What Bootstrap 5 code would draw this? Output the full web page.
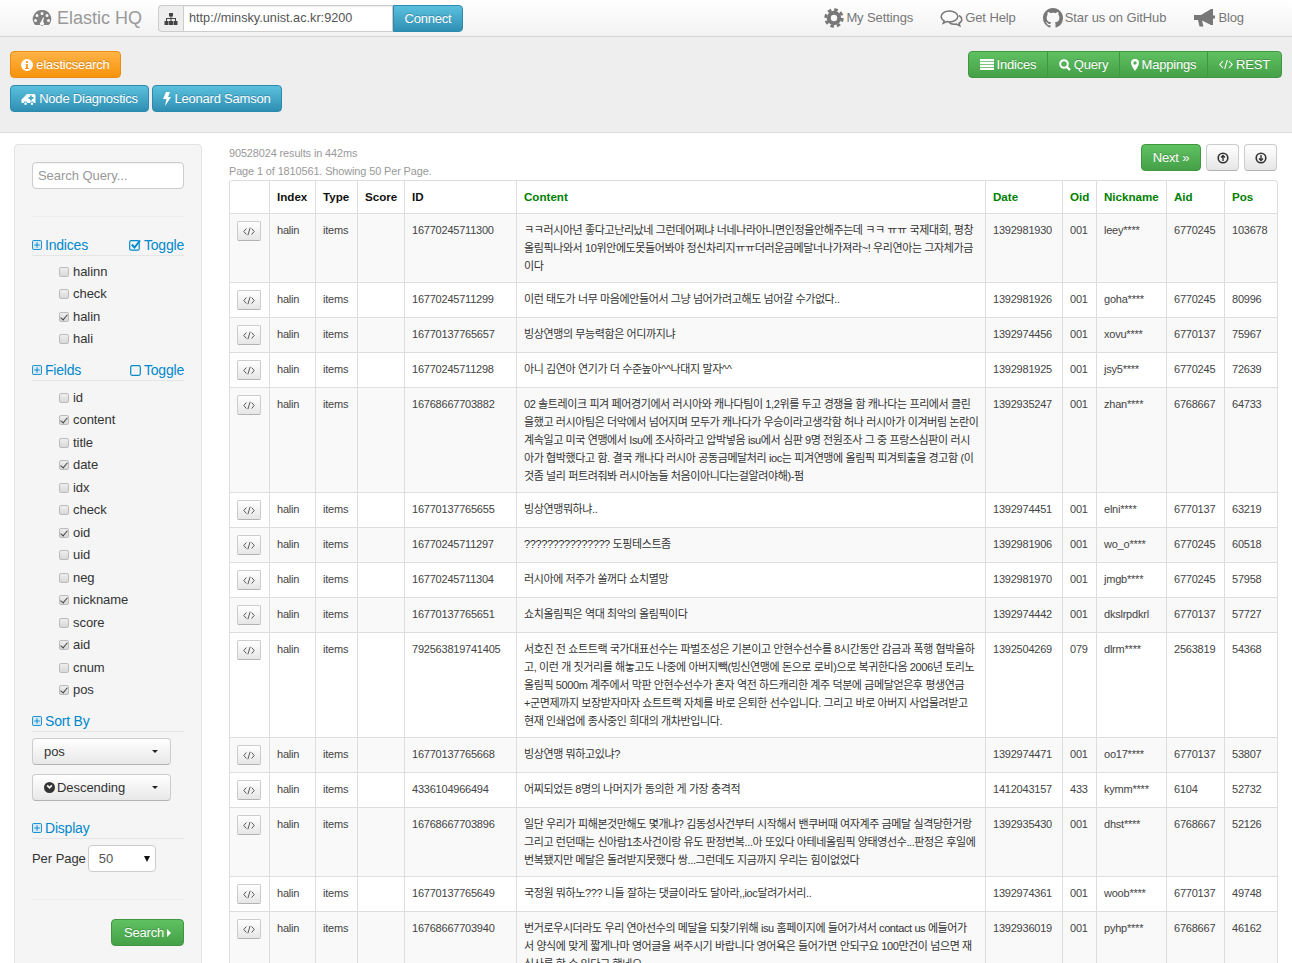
<!DOCTYPE html>
<html lang="ko"><head><meta charset="utf-8"><title>Elastic HQ</title>
<link rel="stylesheet" href="https://cdn.jsdelivr.net/npm/bootstrap@5.3.0/dist/css/bootstrap.min.css">
<style>
html,body{height:963px;overflow:hidden;background:#fff}
body{font-family:"Liberation Sans","Noto Sans CJK KR",sans-serif;font-size:13px;line-height:18px;color:#333}
svg.ic{display:inline-block;vertical-align:-2px;fill:currentColor;flex:none}
.topbar{height:37px;background:linear-gradient(#fff,#f2f2f2);border-bottom:1px solid #d5d5d5;padding:5px 0 0 32px;align-items:flex-start}
.brand{color:#999;font-size:18px;width:126px;line-height:26px;gap:5px}
.brand svg{color:#808080}
.urlgroup{width:305px;height:27px}
.urladdon{width:25px;background:#eee;border:1px solid #ccc;border-right:0;border-radius:4px 0 0 4px;color:#444}
.urlinput{width:210px;border:1px solid #ccc;border-radius:0;height:27px;padding:0 5px;font-size:12.7px;color:#555;box-shadow:inset 0 1px 1px rgba(0,0,0,.07);background:#fff;line-height:25px}
.btn.gbtn{font-size:13px;line-height:18px;padding:4px 10px;height:27px;border-radius:4px;color:#fff;letter-spacing:-.2px;text-shadow:0 -1px 0 rgba(0,0,0,.2);display:inline-flex;align-items:center;justify-content:center;gap:3px;white-space:nowrap}
.g-info{background:linear-gradient(#5bc0de,#2f8fb3);border:1px solid #2b8aad}
.g-warn{background:linear-gradient(#ffb347,#f7930b);border:1px solid #ea8d10}
.g-ok{background:linear-gradient(#5fc162,#45a047);border:1px solid #3f9641}
.btn.g-info:hover,.btn.g-warn:hover,.btn.g-ok:hover{color:#fff}
.urlgroup .gbtn{width:70px;border-radius:0 4px 4px 0;margin-left:0}
.navlinks{margin-left:auto;padding-right:48px;height:26px;gap:27px}
.navlink{color:#777;font-size:13px;letter-spacing:-.1px;text-decoration:none;gap:2px;line-height:26px}
.band{height:96px;background:#eee;border-bottom:1px solid #ddd;padding:14px 10px 0;justify-content:space-between}
.rowbtn{gap:3px;margin-bottom:7px}
.btn-group.navgroup .gbtn{border-radius:0;border-left:1px solid #3f9641;padding:4px 0;flex:none}
.btn-group.navgroup .gbtn:first-child{border-radius:4px 0 0 4px}
.btn-group.navgroup .gbtn:last-child{border-radius:0 4px 4px 0}
.w-es{width:111px}.w-nd{width:139px}.w-ls{width:130px}
.w-ind{width:80px}.w-qry{width:73px}.w-map{width:89px}.w-rst{width:75px}
.w-srch{width:73px}.w-next{width:60px}
.mainwrap{padding:11px 15px 0 14px;gap:27px;align-items:flex-start}
.sidepanel{width:188px;flex:none;height:830px;background:#f5f5f5;border:1px solid #e3e3e3;border-radius:4px;padding:17px 17px 0;letter-spacing:-.05px}
.qinput{height:27px;width:152px;border:1px solid #ccc;border-radius:4px;padding:0 5px;font-size:13px;background:#fff;color:#999;line-height:25px;box-shadow:inset 0 1px 1px rgba(0,0,0,.05)}
.siderule{border:0;border-top:1px solid #eee;margin:0;opacity:1}
.rule1{margin-top:27px}
.rule2{margin-top:27px}
.shead{display:flex;justify-content:space-between;align-items:center;border-bottom:1px solid #e5e5e5;height:19px;color:#0088cc;font-size:14px;line-height:18px;padding-bottom:2px;letter-spacing:-.2px}
.shead span{display:inline-flex;align-items:center;gap:3px}
.sh-ind{margin-top:20px}.sh-fld{margin-top:11px}.sh-srt{margin-top:11px;margin-bottom:6px}.sh-dsp{margin-top:19px}
.cklist{list-style:none;margin:0;padding:5px 0 0 27px}
.cklist.ck-f{padding-top:6px}
.cklist li{height:22.5px;display:flex;align-items:center;gap:4px;color:#333;padding-bottom:1px}
.cbx{appearance:none;-webkit-appearance:none;width:10px;height:10px;border:1px solid #bbb;border-radius:2px;background:linear-gradient(#eee,#d8d8d8);margin:0;flex:none}
.cbx:checked{background:linear-gradient(#eee,#d8d8d8);position:relative}
.cbx:checked::after{content:"";position:absolute;left:2px;top:0;width:4px;height:7px;border:solid #444;border-width:0 1.5px 1.5px 0;transform:rotate(40deg)}
.sddl{width:139px;height:27px;background:linear-gradient(#fff,#e8e8e8);border:1px solid #ccc;border-bottom-color:#b3b3b3;border-radius:4px;display:flex;align-items:center;justify-content:space-between;padding:0 12px 0 11px;color:#333;margin-bottom:9px;gap:2px}
.sddl .lbl{display:flex;align-items:center;gap:2px}
.caretd{width:0;height:0;border-left:3px solid transparent;border-right:3px solid transparent;border-top:3px solid #222;flex:none}
.perrow{display:flex;align-items:center;gap:2px;margin-top:6px;height:27px}
.persel{width:68px;height:27px;border:1px solid #ccc;border-radius:4px;background:#fff;display:flex;align-items:center;justify-content:space-between;padding:0 5px 0 10px;color:#555}
.perarrow{width:0;height:0;border-left:3.5px solid transparent;border-right:3.5px solid transparent;border-top:6px solid #111}
.searchrow{display:flex;justify-content:flex-end;margin-top:19px}
.carr{width:0;height:0;border-top:4px solid transparent;border-bottom:4px solid transparent;border-left:4px solid #fff}
.resarea{width:1048px;flex:none}
.resmeta{color:#999;font-size:10.9px;line-height:18px;letter-spacing:-.1px}
.toptools{gap:5px;height:27px;align-items:flex-start}
.btn.greybtn{height:27px;width:33px;padding:0;background:linear-gradient(#fff,#e6e6e6);border:1px solid #ccc;border-bottom-color:#b3b3b3;border-radius:4px;color:#333;display:inline-flex;align-items:center;justify-content:center}
.reshead{height:36px;justify-content:space-between}
.table.rtable{width:1048px;table-layout:fixed;margin:0;border-collapse:separate;border-spacing:0;font-size:11px;line-height:18px;--bs-table-striped-bg:#f9f9f9;--bs-table-striped-color:#444;--bs-table-color:#444;border:1px solid #ddd;border-left:0;border-radius:4px;color:#444;letter-spacing:-.02em}
.table.rtable>:not(caption)>*>*{padding:7px 8px 7px 7px;border-width:1px 0 0 1px;border-style:solid;border-color:#ddd;vertical-align:top;white-space:nowrap;overflow:visible;color:#444}
.table.rtable>thead>tr>th{border-top-width:0;font-size:11.6px;color:#111;font-weight:700;letter-spacing:0}
.table.rtable>thead>tr>th.gh{color:#008000}
.table.rtable>tbody>tr>td.ctext{font-size:11px;color:#333;letter-spacing:-.036em}
.c1{width:40px}.c2{width:46px}.c3{width:42px}.c4{width:47px}.c5{width:112px}.c6{width:469px}.c7{width:77px}.c8{width:34px}.c9{width:70px}.c10{width:58px}.c11{width:53px}
.codebtn{width:24px;height:20px;padding:0;display:flex;align-items:center;justify-content:center;background:linear-gradient(#fff,#e6e6e6);border:1px solid #ccc;border-bottom-color:#b3b3b3;border-radius:2px;color:#555}
</style></head>
<body>
<svg width="0" height="0" class="position-absolute">
<defs>
<symbol id="i-code" viewBox="0 0 16 12"><path d="M4.5 2 1 6l3.5 4M11.5 2 15 6l-3.500 4M9.500 1 6.500 11" fill="none" stroke="currentColor" stroke-width="1.300"/></symbol>
<symbol id="i-plus" viewBox="0 0 11 11"><rect x=".5" y=".5" width="10" height="10" rx="1.500" fill="#d8e8f5" stroke="currentColor"/><path d="M5.500 2.500v6M2.500 5.500h6" stroke="currentColor"/></symbol>
</defs>
</svg>
<div class="topbar d-flex">
  <div class="brand d-flex align-items-center">
    <svg class="ic" width="20" height="18" viewBox="0 0 20 18"><path fill-rule="evenodd" d="M10 1a9 9 0 0 0-8 13.500c.6 1 1.500 1.500 2.500 1.500h11c1 0 1.900-.5 2.500-1.500A9 9 0 0 0 10 1zM10 3a1.500 1.500 0 1 1 0 3 1.500 1.500 0 0 1 0-3zM5 5a1.500 1.500 0 1 1 0 3 1.500 1.500 0 0 1 0-3zM15 5a1.500 1.500 0 1 1 0 3 1.500 1.500 0 0 1 0-3zM3.500 10a1.500 1.500 0 1 1 0 3 1.500 1.500 0 0 1 0-3zM16.500 10a1.500 1.500 0 1 1 0 3 1.500 1.500 0 0 1 0-3zM11 8.500l1-.2-.9 4.700a2 2 0 1 1-2.200 0z"/></svg>
    <span>Elastic HQ</span>
  </div>
  <div class="urlgroup d-flex">
    <div class="urladdon d-flex align-items-center justify-content-center"><svg class="ic" width="14" height="12" viewBox="0 0 14 12"><path d="M5 0h4v3.500H7.500V5H12v3h1.500v4h-4V8H11V6H7.500v2H9v4H5V8h1.500V6H3v2h1.500v4h-4V8H2V5h4.500V3.500H5z"/></svg></div>
    <div class="urlinput">http://minsky.unist.ac.kr:9200</div>
    <a class="btn gbtn g-info">Connect</a>
  </div>
  <div class="navlinks d-flex">
    <a class="navlink d-flex align-items-center"><svg class="ic" width="20" height="20" viewBox="0 0 20 20"><circle cx="10" cy="10" r="5.200" fill="none" stroke="currentColor" stroke-width="4"/><circle cx="10" cy="10" r="8.300" fill="none" stroke="currentColor" stroke-width="2.800" stroke-dasharray="3.600 2.910"/></svg>My Settings</a>
    <a class="navlink d-flex align-items-center"><svg class="ic" width="23" height="20" viewBox="0 0 23 20"><g fill="none" stroke="currentColor" stroke-width="1.500"><path d="M9.500 3C5 3 1.200 5.400 1.200 8.500c0 1.800 1.200 3.300 3 4.300l-1 2.500 3.500-1.700c1 .2 1.800.3 2.800.3 4.500 0 8.300-2.400 8.300-5.400S14 3 9.500 3z"/><path d="M19 7.500c1.700 1 2.800 2.300 2.800 3.900 0 1.600-1.100 3-2.800 3.800l.8 2.600-3.500-1.800c-3 .6-6-.2-7.300-1.800"/></g></svg>Get Help</a>
    <a class="navlink d-flex align-items-center"><svg class="ic" width="20" height="20" viewBox="0 0 16 16"><path d="M8 0C3.580 0 0 3.580 0 8c0 3.540 2.290 6.530 5.470 7.590.4.070.55-.17.55-.38 0-.19-.01-.82-.01-1.490-2.010.37-2.530-.49-2.690-.94-.09-.23-.48-.94-.82-1.130-.28-.15-.68-.52-.01-.53.63-.01 1.080.58 1.230.82.720 1.210 1.870.87 2.330.66.070-.52.280-.87.510-1.070-1.780-.2-3.640-.89-3.640-3.950 0-.87.310-1.590.820-2.150-.08-.2-.36-1.020.080-2.120 0 0 .67-.21 2.200.82.640-.18 1.320-.27 2-.27.680 0 1.360.09 2 .27 1.530-1.040 2.200-.82 2.200-.82.440 1.100.160 1.920.080 2.120.510.560.820 1.270.820 2.150 0 3.070-1.870 3.750-3.650 3.950.290.250.540.730.540 1.480 0 1.070-.01 1.930-.01 2.200 0 .210.150.460.550.380A8.013 8.013 0 0 0 16 8c0-4.420-3.580-8-8-8z"/></svg>Star us on GitHub</a>
    <a class="navlink d-flex align-items-center"><svg class="ic" width="23" height="20" viewBox="0 0 23 20"><path d="M1 7h7l10-6h2v6.500h2v3h-2V17h-2L9 12.500l1.500 6H6.500L5 12H1z"/></svg>Blog</a>
  </div>
</div>
<div class="band d-flex">
  <div>
    <div class="d-flex rowbtn"><a class="btn gbtn g-warn w-es"><svg class="ic" width="12" height="12" viewBox="0 0 12 12"><path fill-rule="evenodd" d="M6 0a6 6 0 1 0 0 12A6 6 0 0 0 6 0zM5 2h2v2H5zM4.500 5H7v4h1v1H4V9h1V6h-.5z"/></svg>elasticsearch</a></div>
    <div class="d-flex rowbtn"><a class="btn gbtn g-info w-nd"><svg class="ic" width="15" height="12" viewBox="0 0 15 12"><path fill-rule="evenodd" d="M6 1h7a1.500 1.500 0 0 1 1.500 1.500V10h-1.600a2 2 0 0 0-3.800 0H6.400a2 2 0 0 0-3.800 0H.5V6.500zM9 2.500v1.600H7.500v1.800H9v1.600h1.800V5.900h1.600V4.100h-1.600V2.500zM4.500 9.500a1.200 1.200 0 1 1 0 2.400 1.200 1.200 0 0 1 0-2.400zM11 9.500a1.200 1.200 0 1 1 0 2.400 1.200 1.200 0 0 1 0-2.400z"/></svg>Node Diagnostics</a><a class="btn gbtn g-info w-ls"><svg class="ic" width="8" height="14" viewBox="0 0 8 14"><path d="M3 0h4L5 5h3L2 14l1.500-7H0z"/></svg>Leonard Samson</a></div>
  </div>
  <div class="btn-group navgroup align-self-start">
    <a class="btn gbtn g-ok w-ind"><svg class="ic" width="14" height="11" viewBox="0 0 14 11"><path d="M0 0h14v2.200H0zM0 2.900h14v2.200H0zM0 5.800h14V8H0zM0 8.700h14V11H0z"/></svg>Indices</a>
    <a class="btn gbtn g-ok w-qry"><svg class="ic" width="12" height="12" viewBox="0 0 12 12"><circle cx="5" cy="5" r="3.800" fill="none" stroke="currentColor" stroke-width="2"/><path d="M7.800 7.800 11 11" stroke="currentColor" stroke-width="2.400"/></svg>Query</a>
    <a class="btn gbtn g-ok w-map"><svg class="ic" width="8" height="12" viewBox="0 0 8 12"><path fill-rule="evenodd" d="M4 0a4 4 0 0 0-4 4c0 2.500 4 8 4 8s4-5.500 4-8a4 4 0 0 0-4-4zM4 2.300a1.700 1.700 0 1 1 0 3.400 1.700 1.700 0 0 1 0-3.400z"/></svg>Mappings</a>
    <a class="btn gbtn g-ok w-rst"><svg class="ic" width="14" height="11" viewBox="0 0 16 12"><use href="#i-code"/></svg>REST</a>
  </div>
</div>
<div class="mainwrap d-flex">
  <div class="sidepanel">
    <div class="qinput">Search Query...</div>
    <hr class="siderule rule1">
    <div class="shead sh-ind"><span><svg class="ic" width="10" height="10"><use href="#i-plus"/></svg>Indices</span><span><svg class="ic" width="12" height="12" viewBox="0 0 12 12"><rect x=".7" y="1.700" width="9.500" height="9.500" rx="1.500" fill="none" stroke="currentColor" stroke-width="1.200"/><path d="M2.800 5.500 5.500 8.500 11 1.500" fill="none" stroke="currentColor" stroke-width="2"/></svg>Toggle</span></div>
    <ul class="cklist"><li><input class="cbx" type="checkbox">halinn</li><li><input class="cbx" type="checkbox">check</li><li><input class="cbx" type="checkbox" checked>halin</li><li><input class="cbx" type="checkbox">hali</li></ul>
    <div class="shead sh-fld"><span><svg class="ic" width="10" height="10"><use href="#i-plus"/></svg>Fields</span><span><svg class="ic" width="11" height="11" viewBox="0 0 11 11"><rect x=".7" y=".7" width="9.600" height="9.600" rx="1.500" fill="none" stroke="currentColor" stroke-width="1.200"/></svg>Toggle</span></div>
    <ul class="cklist ck-f"><li><input class="cbx" type="checkbox">id</li><li><input class="cbx" type="checkbox" checked>content</li><li><input class="cbx" type="checkbox">title</li><li><input class="cbx" type="checkbox" checked>date</li><li><input class="cbx" type="checkbox">idx</li><li><input class="cbx" type="checkbox">check</li><li><input class="cbx" type="checkbox" checked>oid</li><li><input class="cbx" type="checkbox">uid</li><li><input class="cbx" type="checkbox">neg</li><li><input class="cbx" type="checkbox" checked>nickname</li><li><input class="cbx" type="checkbox">score</li><li><input class="cbx" type="checkbox" checked>aid</li><li><input class="cbx" type="checkbox">cnum</li><li><input class="cbx" type="checkbox" checked>pos</li></ul>
    <div class="shead sh-srt"><span><svg class="ic" width="10" height="10"><use href="#i-plus"/></svg>Sort By</span></div>
    <div class="sddl"><span class="lbl">pos</span><i class="caretd"></i></div>
    <div class="sddl"><span class="lbl"><svg class="ic" width="11" height="11" viewBox="0 0 11 11"><path fill-rule="evenodd" d="M5.500 0a5.500 5.500 0 1 0 0 11 5.500 5.500 0 0 0 0-11zM2.500 4l1.300-1.200 1.700 1.700 1.700-1.700L8.500 4l-3 3z"/></svg>Descending</span><i class="caretd"></i></div>
    <div class="shead sh-dsp"><span><svg class="ic" width="10" height="10"><use href="#i-plus"/></svg>Display</span></div>
    <div class="perrow"><span>Per Page</span><div class="persel"><span>50</span><i class="perarrow"></i></div></div>
    <hr class="siderule rule2">
    <div class="searchrow"><a class="btn gbtn g-ok w-srch">Search<i class="carr"></i></a></div>
  </div>
  <div class="resarea">
    <div class="reshead d-flex">
      <div class="resmeta"><div>90528024 results in 442ms</div><div>Page 1 of 1810561. Showing 50 Per Page.</div></div>
      <div class="d-flex toptools">
        <a class="btn gbtn g-ok w-next">Next »</a>
        <a class="btn greybtn"><svg class="ic" width="12" height="12" viewBox="0 0 12 12"><circle cx="6" cy="6" r="4.800" fill="none" stroke="currentColor" stroke-width="1.600"/><path d="M6 9V3.500M4 5.500l2-2 2 2" fill="none" stroke="currentColor" stroke-width="1.400"/></svg></a>
        <a class="btn greybtn"><svg class="ic" width="12" height="12" viewBox="0 0 12 12"><circle cx="6" cy="6" r="4.800" fill="none" stroke="currentColor" stroke-width="1.600"/><path d="M6 3v5.500M4 6.500l2 2 2-2" fill="none" stroke="currentColor" stroke-width="1.400"/></svg></a>
      </div>
    </div>
    <table class="table table-striped rtable">
      <colgroup><col class="c1"><col class="c2"><col class="c3"><col class="c4"><col class="c5"><col class="c6"><col class="c7"><col class="c8"><col class="c9"><col class="c10"><col class="c11"></colgroup>
      <thead><tr><th></th><th>Index</th><th>Type</th><th>Score</th><th>ID</th><th class="gh">Content</th><th class="gh">Date</th><th class="gh">Oid</th><th class="gh">Nickname</th><th class="gh">Aid</th><th class="gh">Pos</th></tr></thead>
      <tbody>
<tr><td><a class="codebtn"><svg width="12" height="9"><use href="#i-code"/></svg></a></td><td>halin</td><td>items</td><td></td><td>16770245711300</td><td class="ctext">ㅋㅋ러시아년 좋다고난리났네 그런데어쩌냐 너네나라아니면인정을안해주는데 ㅋㅋ ㅠㅠ 국제대회, 평창<br>올림픽나와서 10위안에도못들어봐야 정신차리지ㅠㅠ더러운금메달너나가져라~! 우리연아는 그자체가금<br>이다</td><td>1392981930</td><td>001</td><td>leey****</td><td>6770245</td><td>103678</td></tr>
<tr><td><a class="codebtn"><svg width="12" height="9"><use href="#i-code"/></svg></a></td><td>halin</td><td>items</td><td></td><td>16770245711299</td><td class="ctext">이런 태도가 너무 마음에안들어서 그냥 넘어가려고해도 넘어갈 수가없다..</td><td>1392981926</td><td>001</td><td>goha****</td><td>6770245</td><td>80996</td></tr>
<tr><td><a class="codebtn"><svg width="12" height="9"><use href="#i-code"/></svg></a></td><td>halin</td><td>items</td><td></td><td>16770137765657</td><td class="ctext">빙상연맹의 무능력함은 어디까지냐</td><td>1392974456</td><td>001</td><td>xovu****</td><td>6770137</td><td>75967</td></tr>
<tr><td><a class="codebtn"><svg width="12" height="9"><use href="#i-code"/></svg></a></td><td>halin</td><td>items</td><td></td><td>16770245711298</td><td class="ctext">아니 김연아 연기가 더 수준높아^^나대지 말자^^</td><td>1392981925</td><td>001</td><td>jsy5****</td><td>6770245</td><td>72639</td></tr>
<tr><td><a class="codebtn"><svg width="12" height="9"><use href="#i-code"/></svg></a></td><td>halin</td><td>items</td><td></td><td>16768667703882</td><td class="ctext">02 솔트레이크 피겨 페어경기에서 러시아와 캐나다팀이 1,2위를 두고 경쟁을 함 캐나다는 프리에서 클린<br>을했고 러시아팀은 더악에서 넘어지며 모두가 캐나다가 우승이라고생각함 허나 러시아가 이겨버림 논란이<br>계속일고 미국 연맹에서 Isu에 조사하라고 압박넣음 isu에서 심판 9명 전원조사 그 중 프랑스심판이 러시<br>아가 협박했다고 함. 결국 캐나다 러시아 공동금메달처리 ioc는 피겨연맹에 올림픽 피겨퇴출을 경고함 (이<br>것좀 널리 퍼트려줘봐 러시아놈들 처음이아니다는걸알려야해)-펌</td><td>1392935247</td><td>001</td><td>zhan****</td><td>6768667</td><td>64733</td></tr>
<tr><td><a class="codebtn"><svg width="12" height="9"><use href="#i-code"/></svg></a></td><td>halin</td><td>items</td><td></td><td>16770137765655</td><td class="ctext">빙상연맹뭐하냐..</td><td>1392974451</td><td>001</td><td>elni****</td><td>6770137</td><td>63219</td></tr>
<tr><td><a class="codebtn"><svg width="12" height="9"><use href="#i-code"/></svg></a></td><td>halin</td><td>items</td><td></td><td>16770245711297</td><td class="ctext">??????????????? 도핑테스트좀</td><td>1392981906</td><td>001</td><td>wo_o****</td><td>6770245</td><td>60518</td></tr>
<tr><td><a class="codebtn"><svg width="12" height="9"><use href="#i-code"/></svg></a></td><td>halin</td><td>items</td><td></td><td>16770245711304</td><td class="ctext">러시아에 저주가 쏠꺼다 쇼치멸망</td><td>1392981970</td><td>001</td><td>jmgb****</td><td>6770245</td><td>57958</td></tr>
<tr><td><a class="codebtn"><svg width="12" height="9"><use href="#i-code"/></svg></a></td><td>halin</td><td>items</td><td></td><td>16770137765651</td><td class="ctext">쇼치올림픽은 역대 최악의 올림픽이다</td><td>1392974442</td><td>001</td><td>dkslrpdkrl</td><td>6770137</td><td>57727</td></tr>
<tr><td><a class="codebtn"><svg width="12" height="9"><use href="#i-code"/></svg></a></td><td>halin</td><td>items</td><td></td><td>792563819741405</td><td class="ctext">서호진 전 쇼트트랙 국가대표선수는 파벌조성은 기본이고 안현수선수를 8시간동안 감금과 폭행 협박을하<br>고, 이런 개 짓거리를 해놓고도 나중에 아버지빽(빙신연맹에 돈으로 로비)으로 복귀한다음 2006년 토리노<br>올림픽 5000m  계주에서 막판 안현수선수가 혼자 역전 하드캐리한 계주 덕분에 금메달얻은후 평생연금<br>+군면제까지 보장받자마자 쇼트트랙 자체를 바로 은퇴한 선수입니다. 그리고 바로 아버지 사업물려받고<br>현재 인쇄업에 종사중인 희대의 개차반입니다.</td><td>1392504269</td><td>079</td><td>dlrm****</td><td>2563819</td><td>54368</td></tr>
<tr><td><a class="codebtn"><svg width="12" height="9"><use href="#i-code"/></svg></a></td><td>halin</td><td>items</td><td></td><td>16770137765668</td><td class="ctext">빙상연맹 뭐하고있냐?</td><td>1392974471</td><td>001</td><td>oo17****</td><td>6770137</td><td>53807</td></tr>
<tr><td><a class="codebtn"><svg width="12" height="9"><use href="#i-code"/></svg></a></td><td>halin</td><td>items</td><td></td><td>4336104966494</td><td class="ctext">어찌되었든 8명의 나머지가 동의한 게 가장 충격적</td><td>1412043157</td><td>433</td><td>kymm****</td><td>6104</td><td>52732</td></tr>
<tr><td><a class="codebtn"><svg width="12" height="9"><use href="#i-code"/></svg></a></td><td>halin</td><td>items</td><td></td><td>16768667703896</td><td class="ctext">일단 우리가 피해본것만해도 몇개냐? 김동성사건부터 시작해서 밴쿠버때 여자계주 금메달 실격당한거랑<br>그리고 런던때는 신아람1초사건이랑 유도 판정번복...아 또있다 아테네올림픽 양태영선수...판정은 후일에<br>번복됐지만 메달은 돌려받지못했다 쌍...그런데도 지금까지 우리는 힘이없었다</td><td>1392935430</td><td>001</td><td>dhst****</td><td>6768667</td><td>52126</td></tr>
<tr><td><a class="codebtn"><svg width="12" height="9"><use href="#i-code"/></svg></a></td><td>halin</td><td>items</td><td></td><td>16770137765649</td><td class="ctext">국정원 뭐하노??? 니들 잘하는 댓글이라도 달아라,,ioc달려가서리..</td><td>1392974361</td><td>001</td><td>woob****</td><td>6770137</td><td>49748</td></tr>
<tr><td><a class="codebtn"><svg width="12" height="9"><use href="#i-code"/></svg></a></td><td>halin</td><td>items</td><td></td><td>16768667703940</td><td class="ctext">번거로우시더라도 우리 연아선수의 메달을 되찾기위해 isu 홈페이지에 들어가셔서 contact us 에들어가<br>서 양식에 맞게 짧게나마 영어글을 써주시기 바랍니다 영어욕은 들어가면 안되구요 100만건이 넘으면 재<br>심사를 할 수 있다고 했네요</td><td>1392936019</td><td>001</td><td>pyhp****</td><td>6768667</td><td>46162</td></tr>
      </tbody>
    </table>
  </div>
</div>
</body></html>
